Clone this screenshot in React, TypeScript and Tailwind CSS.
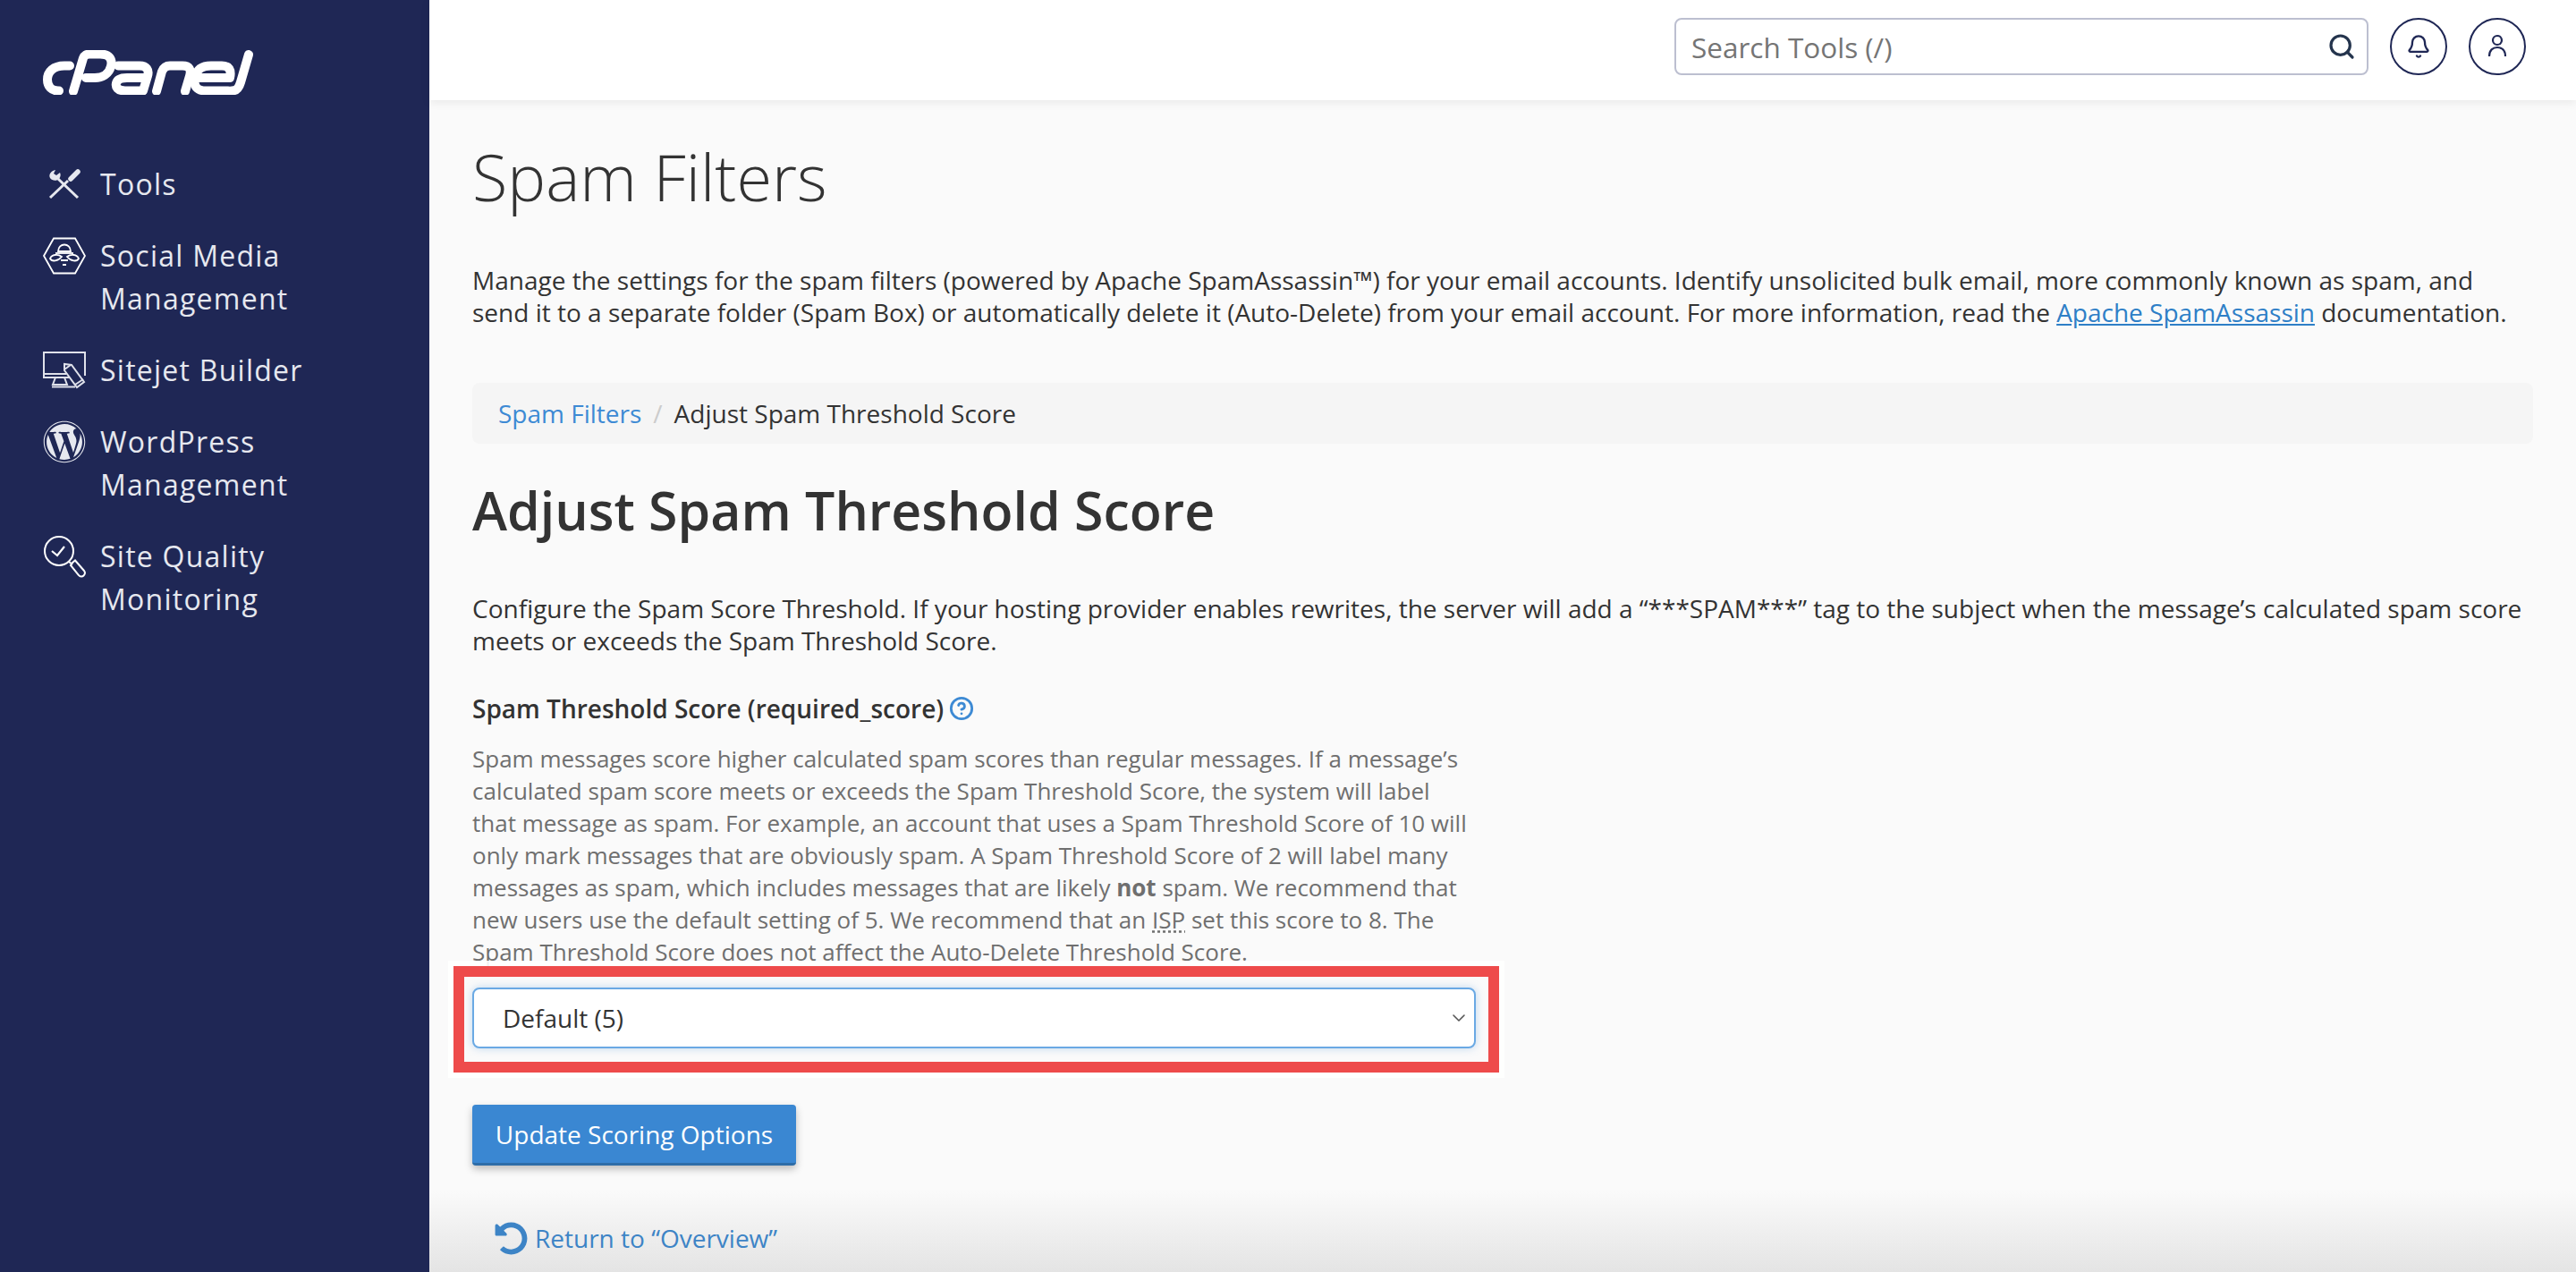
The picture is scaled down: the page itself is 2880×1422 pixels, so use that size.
import React from 'react';
import { Search, Bell, ChevronDown, CircleHelp } from 'lucide-react';
import { FaWordpress, FaUndoAlt } from 'react-icons/fa';

function Logo() {
    return (
        <svg viewBox="0 0 235 50" className="w-[235px] h-[50px]" fill="none" stroke="#fff" strokeWidth="10" strokeLinejoin="round" strokeLinecap="round">
            <path d="M30 17.500 H24 C12 17.500 5 24 5 33 C5 41 10 45.500 17 45.500 H18" />
            <path d="M34 46 L45 9 C46 6 49 4.500 52 4.500 H64 C74 4.500 78 10 76 18 C74 27 66 31 58 31 H48" />
            <path d="M84 17.500 H108 C116 17.500 119 22 117 29 L112 45.500 H92 C83 45.500 81 41 82 37 C83 33 87 31 94 31 H113" />
            <path d="M127 46 L133 24 C135 19 138 17.500 142 17.500 H156 C164 17.500 166 22 164 29 L159 46" />
            <path d="M207 45.500 H182 C172 45.500 168 40 170 31 C172 21 178 17.500 188 17.500 H200 C208 17.500 211 22 209 31 H172" />
            <path d="M230 5 L221 36 C219 43 216 45.500 211 45.500" />
        </svg>
    );
}

function ToolsIcon() {
    return (
        <svg viewBox="0 0 36 34" className="w-[36px] h-[34px]" fill="none" stroke="#e6e8ef" strokeWidth="3">
            <path d="M2 32 L22 13" />
            <path d="M25 11 L33 3" strokeWidth="5.500" strokeLinecap="round" />
            <path d="M11 11 L33 32" />
            <path d="M8 1 C3 2 0 6 2 10 C4 13 9 14 12 11 C14 8 14 6 13 4 L9 7 L6 5 Z" fill="#e6e8ef" stroke="none" />
        </svg>
    );
}

function SocialIcon() {
    return (
        <svg viewBox="0 0 48 42" className="w-[48px] h-[42px]" fill="none" stroke="#fff" strokeWidth="1.800">
            <path d="M1 21 L12 1.500 H36 L47 21 L36 40.500 H12 Z" />
            <path d="M17 16 C17 6 31 6 31 16 Z" />
            <path d="M14 18 H34" />
            <path d="M8 24 C10 19 17 19 21 22 C17 27 10 28 8 24 Z" />
            <path d="M40 24 C38 19 31 19 27 22 C31 27 38 28 40 24 Z" />
            <path d="M20 26 H28 M22 31 H26" />
        </svg>
    );
}

function SitejetIcon() {
    return (
        <svg viewBox="0 0 48 42" className="w-[48px] h-[42px]" fill="none" stroke="#dfe1ea" strokeWidth="2">
            <path d="M30 29 H1 V1 H47 V27" />
            <path d="M1 25 H26" />
            <path d="M14 29 L11 37 H27 L24 29 M10 39.500 H36" />
            <path d="M24 14 L24 21 L38 40 L46 34 L32 15 Z" fill="#1f2755" />
            <path d="M24 20 L31 15 M36 37 L45 31" />
        </svg>
    );
}

function QualityIcon() {
    return (
        <svg viewBox="0 0 48 48" className="w-[48px] h-[48px]" fill="none" stroke="#fff" strokeWidth="2">
            <circle cx="18" cy="18" r="16" />
            <path d="M10 18 L16 23 L24 13" strokeWidth="2.200" />
            <path d="M29 30 L33 33" />
            <path d="M33 31 L36 28.500 L46 40 C47.500 42 47 44 45.500 45.500 C44 47 41.500 47 40 45 L31 34 Z" />
        </svg>
    );
}

function NavItem({ icon, children }: { icon: React.ReactNode; children: React.ReactNode }) {
    return (
        <a className="flex gap-4 text-[32px] leading-[48px] tracking-[1.25px] text-[#e6e8ef]">
            <div className="w-12 shrink-0 h-12 flex items-center justify-center">{icon}</div>
            <div>{children}</div>
        </a>
    );
}

function Sidebar() {
    return (
        <aside className="w-[480px] shrink-0 bg-[#1f2755] pl-12 pt-14">
            <Logo />
            <nav className="mt-[76px] flex flex-col gap-8">
                <NavItem icon={<ToolsIcon />}>Tools</NavItem>
                <NavItem icon={<SocialIcon />}>Social Media<br />Management</NavItem>
                <NavItem icon={<SitejetIcon />}>Sitejet Builder</NavItem>
                <NavItem icon={<FaWordpress className="w-12 h-12 text-[#e6e8ef]" />}>WordPress<br />Management</NavItem>
                <NavItem icon={<QualityIcon />}>Site Quality<br />Monitoring</NavItem>
            </nav>
        </aside>
    );
}

function Topbar() {
    return (
        <header className="relative z-10 h-28 bg-white shadow-[0_2px_10px_rgba(0,0,0,0.08)] flex items-start justify-end pt-5 pr-14 gap-6">
            <div className="w-[776px] h-16 rounded-lg border-2 border-[#bcbfd0] flex items-center justify-between pl-[17px] pr-[12px]">
                <span className="relative top-[1px] text-[31.500px] text-[#757575]">Search Tools (/)</span>
                <Search className="w-[32px] h-[32px] text-[#24344d]" strokeWidth={2.4} />
            </div>
            <button className="w-16 h-16 rounded-full border-2 border-[#1f2755] flex items-center justify-center">
                <Bell className="w-7 h-7 text-[#1f2755]" strokeWidth={2} />
            </button>
            <button className="w-16 h-16 rounded-full border-2 border-[#1f2755] flex items-center justify-center">
                <svg viewBox="0 0 24 32" className="w-6 h-8" fill="none" stroke="#1f2755" strokeWidth="2.200">
                    <circle cx="12" cy="9" r="5" />
                    <path d="M3 27 C3 20 7 17 12 17 C17 17 21 20 21 27" />
                </svg>
            </button>
        </header>
    );
}

export default function App() {
    return (
        <div className="flex h-[1422px] overflow-hidden bg-[#fafafa] font-['Open_Sans',sans-serif] text-[#333]">
            <Sidebar />
            <main className="relative flex-1 min-w-0">
                <div className="absolute inset-x-0 bottom-0 h-[90px] bg-gradient-to-b from-transparent to-[#e4e4e4]" />
                <Topbar />
                <div className="relative pl-12 pr-12">
                    <h1 className="mt-[38px] text-[72px] leading-[94px] font-light">Spam Filters</h1>
                    <p className="mt-[51px] text-[28px] leading-9">
                        Manage the settings for the spam filters (powered by Apache SpamAssassin™) for your email accounts. Identify unsolicited bulk email, more commonly known as spam, and send it to a separate folder (Spam Box) or automatically delete it (Auto-Delete) from your email account. For more information, read the <a className="text-[#2e7fc7] underline">Apache SpamAssassin</a> documentation.
                    </p>
                    <nav className="mt-[61px] h-[68px] rounded-lg bg-[#f5f5f5] pl-[29px] flex items-center text-[28px]">
                        <a className="text-[#3d8ad4]">Spam Filters</a>
                        <span className="px-[13px] text-[#ccc]">/</span>
                        <span>Adjust Spam Threshold Score</span>
                    </nav>
                    <h2 className="mt-[34px] text-[59px] leading-[80px] font-semibold">Adjust Spam Threshold Score</h2>
                    <p className="mt-[52px] text-[28px] leading-9">
                        Configure the Spam Score Threshold. If your hosting provider enables rewrites, the server will add a “***SPAM***” tag to the subject when the message’s calculated spam score meets or exceeds the Spam Threshold Score.
                    </p>
                    <label className="mt-[38px] flex items-center gap-[6px] text-[28px] leading-10 font-semibold">
                        Spam Threshold Score (required_score)
                        <CircleHelp className="w-7 h-7 text-[#3d8ad4]" strokeWidth={2.4} />
                    </label>
                    <p className="mt-[18px] w-[1122px] h-[252px] text-[26px] leading-9 text-[#6f6f6f]">
                        Spam messages score higher calculated spam scores than regular messages. If a message’s calculated spam score meets or exceeds the Spam Threshold Score, the system will label that message as spam. For example, an account that uses a Spam Threshold Score of 10 will only mark messages that are obviously spam. A Spam Threshold Score of 2 will label many messages as spam, which includes messages that are likely <strong className="font-bold">not</strong> spam. We recommend that new users use the default setting of 5. We recommend that an <abbr className="underline decoration-dotted">ISP</abbr> set this score to 8. The Spam Threshold Score does not affect the Auto-Delete Threshold Score.
                    </p>
                    <div className="relative mt-[22px] w-[1122px] h-[68px]">
                        <select className="w-full h-full appearance-none rounded-lg border-2 border-[#6aa9e4] bg-white pl-[32px] text-[28px] text-[#333] shadow-[0_0_10px_rgba(82,151,219,0.35)]">
                            <option>Default (5)</option>
                        </select>
                        <ChevronDown className="absolute right-[7px] top-[22px] w-6 h-6 text-[#555]" strokeWidth={1.6} />
                        {/* annotation box */}
                        <div className="absolute -left-[21px] -right-[26px] -top-[24px] -bottom-[27px] border-[12px] border-[#ee4b4b] outline-[6px] outline-white/90 pointer-events-none" />
                    </div>
                    <button className="mt-[63px] block w-[362px] h-[68px] rounded bg-[#3a87d2] border-b-[3px] border-[#2e6da8] text-[28px] text-white shadow-[0_4px_8px_rgba(0,0,0,0.25)]">
                        Update Scoring Options
                    </button>
                    <a className="mt-[60px] ml-[25px] flex items-center gap-[8px] text-[28px] text-[#3d84c6]">
                        <FaUndoAlt className="w-[37px] h-[37px]" />
                        Return to “Overview”
                    </a>
                </div>
            </main>
        </div>
    );
}
